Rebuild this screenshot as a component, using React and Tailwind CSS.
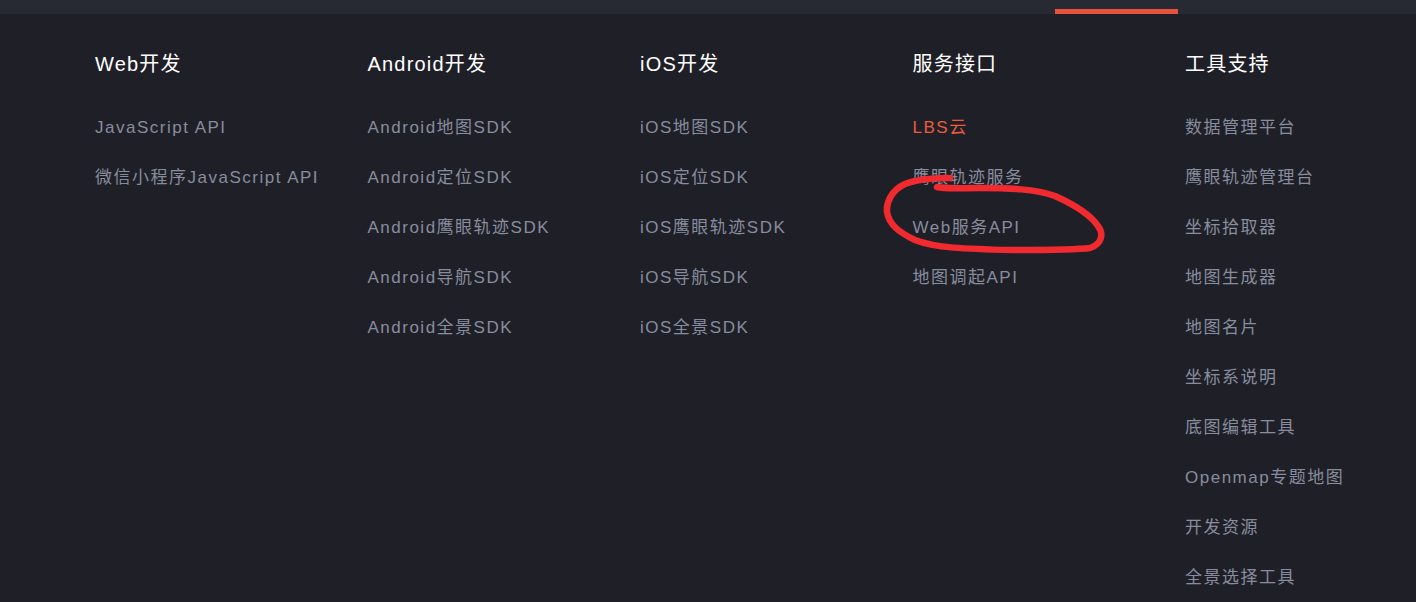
import React from 'react';

const COLUMNS = [
    { title: 'Web开发', items: ['JavaScript API', '微信小程序JavaScript API'] },
    { title: 'Android开发', items: ['Android地图SDK', 'Android定位SDK', 'Android鹰眼轨迹SDK', 'Android导航SDK', 'Android全景SDK'] },
    { title: 'iOS开发', items: ['iOS地图SDK', 'iOS定位SDK', 'iOS鹰眼轨迹SDK', 'iOS导航SDK', 'iOS全景SDK'] },
    { title: '服务接口', items: ['LBS云', '鹰眼轨迹服务', 'Web服务API', '地图调起API'], active: 'LBS云' },
    { title: '工具支持', items: ['数据管理平台', '鹰眼轨迹管理台', '坐标拾取器', '地图生成器', '地图名片', '坐标系说明', '底图编辑工具', 'Openmap专题地图', '开发资源', '全景选择工具'] },
];

const FONT = { fontFamily: '"Liberation Sans", "Noto Sans CJK SC", sans-serif' };

export default function App() {
    return (
        <div className="relative w-[1416px] h-[602px] overflow-hidden bg-[#1f2027]" style={FONT}>
            {/* top nav strip */}
            <div className="h-[14px] bg-[#282a33] flex">
                <div className="ml-[1055px] w-[123px] mt-[9px] h-[5px] bg-[#e9523a]" />
            </div>

            <div className="flex pl-[95px] pt-[36px]">
                {COLUMNS.map((col) => (
                    <div key={col.title} className="w-[272.5px] shrink-0">
                        <h3 className="text-[20px] leading-[28px] tracking-[1.2px] text-white font-normal">{col.title}</h3>
                        <ul className="mt-[25px]">
                            {col.items.map((item) => (
                                <li
                                    key={item}
                                    className={
                                        'text-[17px] leading-[50px] tracking-[1.5px] whitespace-nowrap ' +
                                        (item === col.active ? 'text-[#ea5b40]' : 'text-[#878c9e]')
                                    }
                                >
                                    {item}
                                </li>
                            ))}
                        </ul>
                    </div>
                ))}
            </div>

            {/* hand-drawn annotation */}
            <svg className="absolute left-0 top-0 pointer-events-none" width="1416" height="602">
                <path
                    d="M950 178 C930 178 915 180 905 184 C892 190 886 202 887 212 C889 224 898 232 915 240 C935 248 965 249 1013 250 C1050 250 1075 250 1090 248 C1102 244 1104 234 1098 226 C1090 214 1075 205 1055 196 C1035 189 1010 188 980 188 C960 188 945 189 937 187"
                    fill="none"
                    stroke="#f02a2f"
                    strokeWidth="6.5"
                    strokeLinecap="round"
                    strokeLinejoin="round"
                />
            </svg>
        </div>
    );
}
